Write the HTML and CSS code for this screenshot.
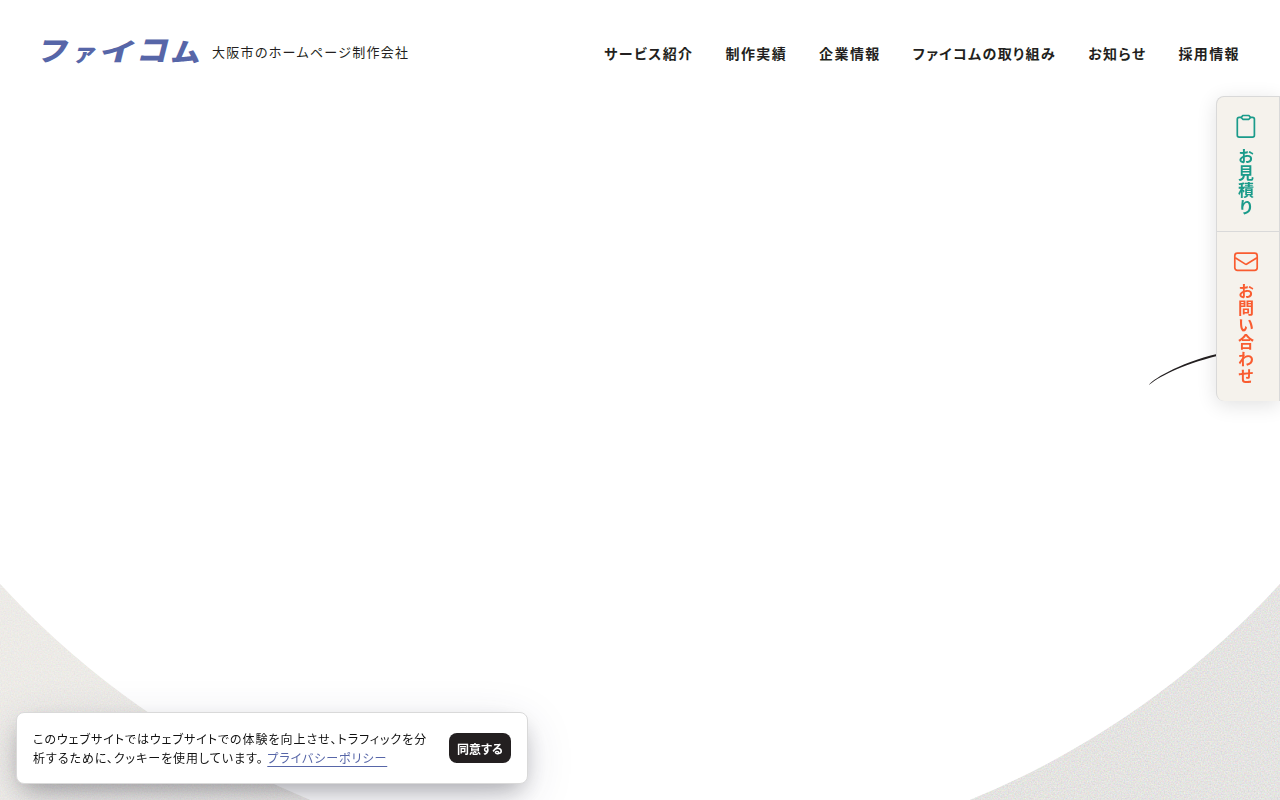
FILE: index.html
```html
<!DOCTYPE html>
<html lang="ja">
<head>
    <meta charset="UTF-8">
    <meta name="viewport" content="width=device-width, initial-scale=1.0">
    <title>ファイコム</title>
    <link rel="stylesheet" href="styles.css">
</head>
<body>

<!-- background -->
<svg class="hero-bg" viewBox="0 0 1280 800" aria-hidden="true">
    <defs>
        <linearGradient id="paper" x1="0" y1="0" x2="1" y2="0">
            <stop offset="0" stop-color="#f4f2ee"/>
            <stop offset="0.5" stop-color="#f2f1ed"/>
            <stop offset="1" stop-color="#f3f2f0"/>
        </linearGradient>
        <filter id="grain" x="0" y="0" width="100%" height="100%" color-interpolation-filters="sRGB">
            <feTurbulence type="fractalNoise" baseFrequency="0.7" numOctaves="2" seed="4"/>
            <feColorMatrix values="1.5 0 0 0 -.25  0 1.5 0 0 -.25  0 0 1.5 0 -.25  0 0 0 0 1"/>
        </filter>
    </defs>
    <rect y="560" width="1280" height="240" fill="url(#paper)"/>
    <rect class="grain-left" y="560" width="640" height="240" filter="url(#grain)"/>
    <rect class="grain-right" x="640" y="560" width="640" height="240" filter="url(#grain)"/>
    <circle cx="640" cy="-4" r="869" fill="#fff"/>
    <path d="M1149 385 C1150 381 1178 363 1218 353.7 L1218 355.7 C1180 365 1157 378 1149 385Z" fill="#231f20"/>
</svg>

<header class="header">
    <a class="brand" href="#">
        <svg class="logo" width="160" height="26" viewBox="0 0 160 26" role="img" aria-label="ファイコム">
            <g class="logo-text">
                <text transform="translate(-4.5 22) skewX(-14) scale(1.08 .96)">フ</text>
                <text transform="translate(31.5 21.5) skewX(-14) scale(.82 .8)">ァ</text>
                <text transform="translate(58 21.5) skewX(-14) scale(1.24 .87)">イ</text>
                <text transform="translate(95.5 21.5) skewX(-14) scale(1.08 1.03)">コ</text>
                <text transform="translate(130 22.5) skewX(-4) scale(1.03 .92)">ム</text>
            </g>
        </svg>
        <span class="tagline">大阪市のホームページ制作会社</span>
    </a>
    <nav class="nav">
        <a href="#">サービス紹介</a>
        <a href="#">制作実績</a>
        <a href="#">企業情報</a>
        <a href="#">ファイコムの取り組み</a>
        <a href="#">お知らせ</a>
        <a href="#">採用情報</a>
    </nav>
</header>

<aside class="side">
    <a class="side-item estimate" href="#">
        <svg width="20" height="26" viewBox="0 0 20 26" fill="none" stroke="currentColor" stroke-width="1.7">
            <path d="M5.5 3.3H3.2C2 3.3 1.3 4 1.3 5.2V21.3c0 1.2.7 1.9 1.9 1.9h13.3c1.2 0 1.9-.7 1.9-1.9V5.2c0-1.2-.7-1.9-1.9-1.9h-2.3"/>
            <path d="M6.8 1.5h6.1l1.6 2-1.6 1.8H6.8L5.2 3.5z" stroke-linejoin="round"/>
        </svg>
        <span>お見積り</span>
    </a>
    <a class="side-item contact" href="#">
        <svg width="26" height="20" viewBox="0 0 26 20" fill="none" stroke="currentColor" stroke-width="1.7">
            <rect x="1.8" y="1.2" width="22.4" height="17.2" rx="2.6"/>
            <path d="M2.2 5.8l10.2 6.3c.5.3.9.3 1.4 0L24 5.8"/>
        </svg>
        <span>お問い合わせ</span>
    </a>
</aside>

<div class="cookie">
    <p>このウェブサイトではウェブサイトでの体験を向上させ、トラフィックを分<br>析するために、クッキーを使用しています。 <a href="#">プライバシーポリシー</a></p>
    <button type="button">同意する</button>
</div>

</body>
</html>
```

FILE: styles.css
```css
* {
    box-sizing: border-box;
}

body {
    margin: 0;
    height: 100vh;
    overflow: hidden;
    background: #fff;
    color: #231f20;
    font-family: "Noto Sans CJK JP", sans-serif;
    font-feature-settings: "palt";
}

a {
    color: inherit;
    text-decoration: none;
}

.hero-bg {
    position: absolute;
    top: 0;
    left: 0;
    width: 1280px;
    height: 800px;
}

.grain-left {
    opacity: 0.06;
}

.grain-right {
    opacity: 0.12;
}

.header {
    position: relative;
    display: flex;
    justify-content: space-between;
    align-items: center;
    height: 104px;
    padding: 0 40px;
}

.brand {
    display: flex;
    align-items: center;
    gap: 12px;
}

.logo {
    display: block;
    overflow: visible;
}

.logo-text {
    fill: #5766a8;
    font-size: 29px;
    font-weight: 900;
    font-feature-settings: "palt" 0;
}

.tagline {
    padding-bottom: 1px;
    font-size: 13px;
    line-height: 20px;
    letter-spacing: 0.1em;
}

.nav {
    display: flex;
    gap: 32px;
    padding-top: 2px;
    font-size: 14px;
    font-weight: 700;
    line-height: 20px;
    letter-spacing: 0.1em;
}

/* fixed buttons on the right edge */
.side {
    position: fixed;
    top: 96px;
    right: 0;
    width: 64px;
    height: 305px;
    background: #f5f2ec;
    border: 1px solid #d9d9d9;
    border-bottom: 0;
    border-radius: 8px 0 0 8px;
    box-shadow: 0 4px 20px rgba(0, 0, 0, 0.12);
}

.side-item {
    display: flex;
    flex-direction: column;
    align-items: center;
    padding-right: 4px;
    font-size: 16px;
    font-weight: 700;
    line-height: 20px;
    letter-spacing: 0.06em;
}

.side-item span {
    writing-mode: vertical-rl;
    font-feature-settings: "palt" 0;
}

.estimate {
    height: 135px;
    padding-top: 17px;
    gap: 8px;
    color: #1a9b8a;
    border-bottom: 1px solid #d9d9d9;
}

.contact {
    padding-top: 20px;
    gap: 11px;
    color: #f95c30;
}

.cookie {
    position: fixed;
    left: 16px;
    bottom: 16px;
    width: 512px;
    height: 72px;
    display: flex;
    align-items: center;
    justify-content: space-between;
    padding: 0 16px;
    background: #fff;
    border: 1px solid #d9d9d9;
    border-radius: 8px;
    box-shadow: 0 13px 50px -4px rgba(50, 50, 93, 0.18), 0 10px 24px -6px rgba(0, 0, 0, 0.3);
}

.cookie p {
    margin: 0;
    color: #111;
    font-size: 12px;
    line-height: 19px;
    letter-spacing: 0.08em;
    white-space: nowrap;
}

.cookie p a {
    color: #5766a8;
    text-decoration: underline;
    text-decoration-thickness: 1px;
    text-underline-offset: 3px;
}

.cookie button {
    width: 62px;
    height: 30px;
    padding: 0;
    border: 0;
    border-radius: 8px;
    background: #231f20;
    color: #fff;
    font: 700 12px "Noto Sans CJK JP", sans-serif;
    font-feature-settings: "palt";
}
```
